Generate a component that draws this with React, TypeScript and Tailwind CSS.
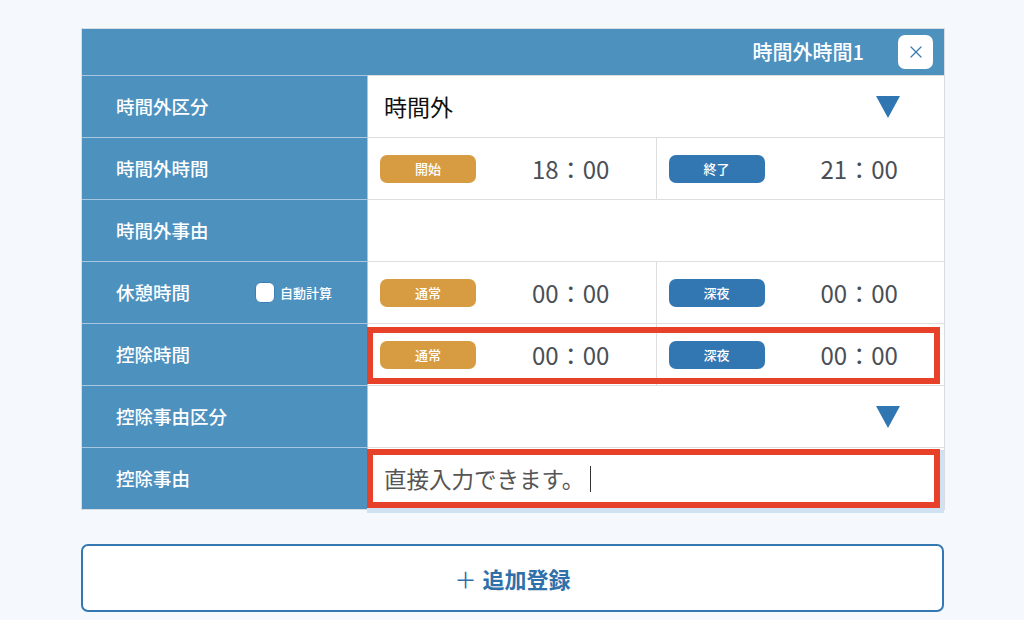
import { X } from "lucide-react";

const font = "font-['Noto_Sans_CJK_JP','Noto_Sans',sans-serif]";

const Badge = ({ label, tone }: { label: string; tone: "orange" | "blue" }) => (
  <span
    className={`flex h-[28px] w-[96px] items-center justify-center rounded-[7px] text-[13px] font-medium text-white ${
      tone === "orange" ? "bg-[#d79c41]" : "bg-[#3377b2]"
    }`}
  >
    {label}
  </span>
);

const TimeCell = ({ label, tone, time, last }: { label: string; tone: "orange" | "blue"; time: string; last?: boolean }) => (
  <div className={`flex flex-1 items-center pl-3 ${last ? "" : "border-r border-[#dedede]"}`}>
    <Badge label={label} tone={tone} />
    <span className="ml-[56px] text-[24px] leading-none text-[#4a4f55]">{time}</span>
  </div>
);

const Triangle = () => (
  <svg width="24" height="22" viewBox="0 0 24 22" className="mr-[44px]">
    <path d="M0 0 H24 L12 22 Z" fill="#2f76b3" />
  </svg>
);

const Row = ({ label, children, extra }: { label: React.ReactNode; children?: React.ReactNode; extra?: React.ReactNode }) => (
  <div className="relative flex h-[62px]">
    <div className="flex w-[286px] items-center border-t border-r border-[#a9c7df] bg-[#4d91bf] pl-[34px] text-[18.5px] font-medium text-white">
      {label}
    </div>
    <div className="flex flex-1 items-stretch border-t border-[#dedede] bg-white">{children}</div>
    {extra}
  </div>
);

export default function App() {
  return (
    <div className={`min-h-screen bg-[#f5f9fd] pt-[28px] ${font}`}>
      <div className="ml-[81px] w-[864px] border border-[#d6dde3] bg-white">
        <div className="flex h-[46px] items-center justify-end bg-[#4d91bf] pr-[11px]">
          <span className="text-[20px] font-medium text-white">時間外時間1</span>
          <button className="ml-[34px] flex h-[34px] w-[35px] items-center justify-center rounded-[7px] bg-white">
            <X className="h-[20px] w-[20px] text-[#3a7ab3]" strokeWidth={1.5} />
          </button>
        </div>

        <Row label="時間外区分">
          <div className="flex flex-1 items-center justify-between pl-4">
            <span className="text-[23px] text-[#111]">時間外</span>
            <Triangle />
          </div>
        </Row>

        <Row label="時間外時間">
          <TimeCell label="開始" tone="orange" time="18：00" />
          <TimeCell label="終了" tone="blue" time="21：00" last />
        </Row>

        <Row label="時間外事由" />

        <Row
          label={
            <div className="flex items-center">
              <span className="w-[139px]">休憩時間</span>
              <span className="h-[21px] w-[20px] rounded-[6px] border border-[#3d7fb5] bg-white" />
              <span className="ml-[5px] text-[13px]">自動計算</span>
            </div>
          }
        >
          <TimeCell label="通常" tone="orange" time="00：00" />
          <TimeCell label="深夜" tone="blue" time="00：00" last />
        </Row>

        <Row
          label="控除時間"
          extra={<div className="pointer-events-none absolute top-[4px] bottom-[1px] left-[285px] right-[4px] border-[6px] border-[#e8412a]" />}
        >
          <TimeCell label="通常" tone="orange" time="00：00" />
          <TimeCell label="深夜" tone="blue" time="00：00" last />
        </Row>

        <Row label="控除事由区分">
          <div className="flex flex-1 items-center justify-end">
            <Triangle />
          </div>
        </Row>

        <Row
          label="控除事由"
          extra={
            <div className="pointer-events-none absolute top-[2px] bottom-[1px] left-[285px] right-[4px] border-[6px] border-[#e8412a] shadow-[2px_3px_0_2px_#d0e1f2]" />
          }
        >
          <div className="flex flex-1 items-center pl-4">
            <span className="text-[22.5px] text-[#555]">直接入力できます。</span>
            <span className="ml-[6px] h-[26px] w-px bg-[#333]" />
          </div>
        </Row>
      </div>

      <button className="mt-[34px] ml-[81px] flex h-[68px] w-[863px] items-center justify-center rounded-[7px] border-2 border-[#3577b1] bg-white text-[22px] font-bold text-[#2f70a9]">
        <span className="mr-[6px] font-normal">＋</span>
        追加登録
      </button>
    </div>
  );
}
